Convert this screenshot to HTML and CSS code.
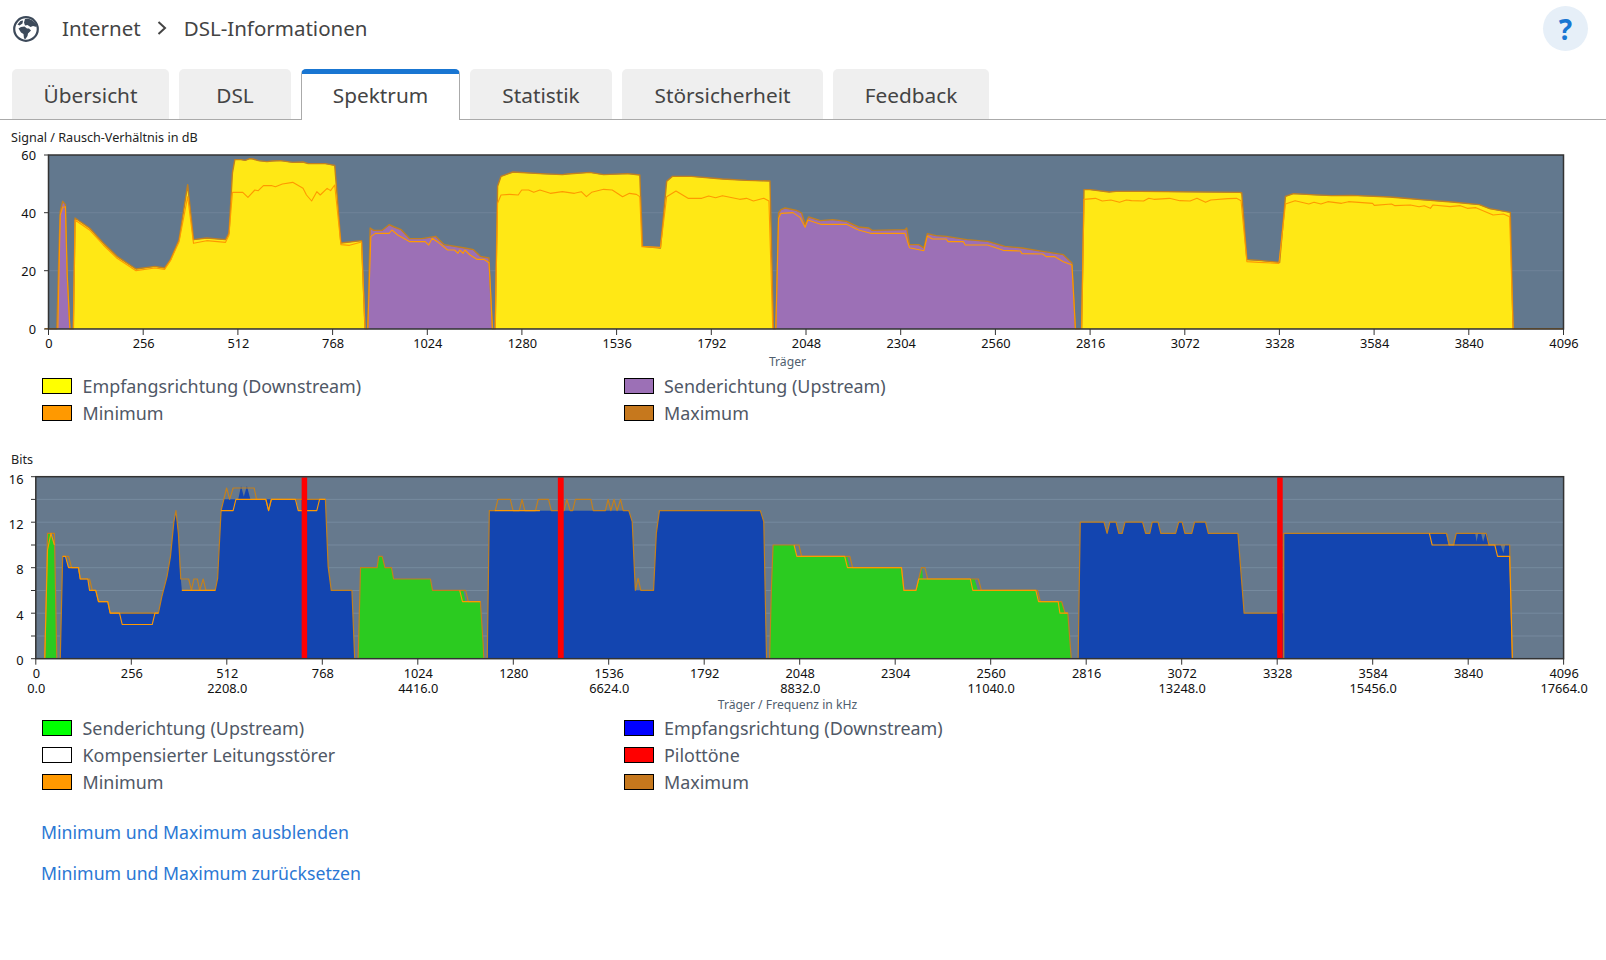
FILE: index.html
```html
<!DOCTYPE html>
<html lang="de">
<head>
<meta charset="utf-8">
<title>DSL-Informationen</title>
<link rel="stylesheet" href="styles.css">
</head>
<body>
<header class="topbar">
  <svg class="globe" viewBox="0 0 26 26" aria-hidden="true">
    <circle cx="13" cy="13" r="11.8" class="globe-ring"/>
    <path class="globe-land" d="M4.5 8.5 L7.5 5 L10 4.5 L9.5 7.5 L6.5 9.5 Z"/>
    <path class="globe-land" d="M12 3 Q18 1.8 23 8 L23.6 11 L20 10 L17.5 11 L14.5 9 L12 9.5 L11 6.5 Z"/>
    <path class="globe-land" d="M5.5 12.5 L8 11 L11.5 10.5 L14 12.5 L16 12.5 L18 14.5 L15 17.5 L14.5 20 L12.5 23 L11 22.5 L10.5 18 L8 16.5 Z"/>
  </svg>
  <nav class="crumbs">
    <span>Internet</span>
    <svg class="chevron" viewBox="0 0 10 14" aria-hidden="true"><path d="M1.5 1 L8 7 L1.5 13"/></svg>
    <span>DSL-Informationen</span>
  </nav>
  <button class="help" type="button">?</button>
</header>

<div class="tabs">
  <a class="tab">Übersicht</a>
  <a class="tab">DSL</a>
  <a class="tab tab-active">Spektrum</a>
  <a class="tab">Statistik</a>
  <a class="tab">Störsicherheit</a>
  <a class="tab">Feedback</a>
</div>

<main>
  <h2 class="chart-title chart-title-first">Signal / Rausch-Verhältnis in dB</h2>
  <svg class="chart chart-snr" viewBox="0 145 1606 225" role="img">
    <rect class="plot-bg-a" x="48.5" y="155" width="1515" height="174"/>
    <path class="grid" d="M48.5 212.7H1563.5M48.5 270.7H1563.5"/>
    <g transform="translate(0 140) scale(0.34435 0.33333)">
      <g class="purple">
        <polygon points="165,566 172,300 175,215 182,185 190,195 195,400 203,566"/>
        <polygon points="1068,566 1075,265 1085,272 1110,272 1130,255 1145,262 1165,270 1190,297 1225,297 1265,290 1290,315 1350,325 1375,330 1395,350 1420,355 1423,420 1430,566"/>
        <g transform="translate(1568 0)"><polygon points="685,566 693,220 700,210 712,205 745,212 760,220 770,255 780,232 815,243 850,240 890,245 925,262 955,265 965,272 1060,270 1065,265 1073,315 1100,315 1115,325 1125,282 1150,288 1180,290 1240,300 1300,305 1350,320 1400,325 1460,335 1520,345 1545,370 1555,566"/></g>
      </g>
      <g class="yellow">
        <polygon points="213,566 218,235 260,265 300,310 340,350 395,388 450,380 478,385 495,360 520,300 545,135 562,300 600,295 655,300 665,280 675,100 682,60 700,60 712,62 725,57 735,58 750,63 775,66 790,64 815,63 850,68 880,67 895,72 925,72 945,72 972,77 990,310 1050,303 1060,566"/>
        <polygon points="1438,566 1445,140 1455,110 1490,97 1568,102 1633,105 1648,103 1713,98 1753,105 1823,102 1858,106 1866,320 1918,325 1936,125 1953,110 2008,110 2098,118 2168,122 2236,124 2246,566"/>
        <g transform="translate(3096 0)"><polygon points="45,566 52,150 70,150 125,157 145,155 215,155 505,158 510,160 525,360 560,362 620,368 637,170 660,162 710,165 770,168 830,167 940,172 1010,178 1030,180 1120,187 1200,195 1230,207 1290,218 1298,566"/></g>
      </g>
      <g class="line-max" transform="translate(0 2)">
        <polyline points="130,564 165,564 172,300 175,212 182,182 190,192 195,400 203,564 213,564 218,232 260,262 300,307 340,347 395,385 450,377 478,382 495,357 520,297 545,132 562,297 600,292 655,297 665,277 675,97 682,57 700,57 712,59 725,54 735,55 750,60 775,63 790,61 815,60 850,65 880,64 895,69 925,69 945,69 972,74 990,307 1050,300 1060,564 1068,564 1075,262 1085,269 1110,269 1130,252 1145,259 1165,267 1190,294 1225,294 1265,287 1290,312 1350,322 1375,327 1395,347 1420,352 1423,420 1430,564 1438,564 1445,137 1455,107 1490,94 1568,99 1633,102 1648,100 1713,95 1753,102 1823,99 1858,103 1866,317 1918,322 1936,122 1953,107 2008,107 2098,115 2168,119 2236,121 2246,564 2253,564"/>
        <g transform="translate(1568 0)"><polyline points="685,564 693,217 700,207 712,202 745,209 760,217 770,252 780,229 815,240 850,237 890,242 925,259 955,262 965,269 1060,267 1065,262 1073,312 1100,312 1115,322 1125,279 1150,285 1180,287 1240,297 1300,302 1350,317 1400,322 1460,332 1520,342 1545,367 1555,564 1568,564"/></g>
        <g transform="translate(3096 0)"><polyline points="45,564 52,147 70,147 125,154 145,152 215,152 505,155 510,157 525,357 560,359 620,365 637,167 660,159 710,162 770,165 830,164 940,169 1010,175 1030,177 1120,184 1200,192 1230,204 1290,215 1298,564 1445,564"/></g>
      </g>
      <g class="line-min">
        <polyline points="168,566 175,225 182,202 190,200 195,400 203,566"/>
        <polyline points="213,566 218,240 260,270 300,315 340,355 395,392 450,384 478,388 495,362 520,305 545,170 562,310 600,302 655,307 665,285 675,157 705,157 720,172 740,150 750,152 765,137 790,137 800,140 820,132 850,127 880,145 890,165 905,183 920,155 930,165 950,145 960,152 972,135 990,314 1015,316 1050,306 1060,566"/>
        <polyline points="1068,566 1077,290 1090,280 1130,280 1138,270 1155,285 1190,305 1235,305 1245,315 1255,295 1270,305 1300,330 1320,330 1330,340 1335,330 1345,340 1350,330 1365,345 1385,358 1405,358 1420,368 1423,420 1430,566"/>
        <polyline points="1438,566 1445,190 1455,165 1480,163 1505,165 1515,150 1535,150 1550,157 1568,150 1598,160 1633,155 1668,160 1688,155 1703,170 1718,157 1753,148 1778,150 1808,170 1828,160 1848,163 1858,170 1864,320 1918,322 1936,170 1963,153 1998,175 2038,175 2058,168 2078,173 2098,167 2148,178 2168,175 2188,183 2218,175 2233,183 2244,566"/>
        <g transform="translate(1568 0)"><polyline points="685,566 693,235 700,220 735,218 755,232 770,262 778,240 815,253 890,253 925,270 960,280 1060,280 1073,323 1115,332 1125,288 1140,297 1180,297 1185,305 1230,305 1235,315 1300,315 1345,331 1395,333 1400,341 1460,342 1470,350 1495,350 1520,365 1545,375 1555,566"/></g>
        <g transform="translate(3096 0)"><polyline points="45,566 52,178 85,175 105,183 130,180 155,187 175,180 190,182 225,183 240,175 255,178 300,175 330,182 360,183 380,175 405,187 420,180 470,176 495,175 508,182 525,365 560,367 618,370 637,192 665,182 705,192 720,187 740,192 760,185 800,190 820,185 890,190 895,196 945,192 955,197 1000,195 1025,200 1040,197 1058,205 1065,195 1115,200 1145,197 1165,205 1190,203 1240,225 1270,222 1288,230 1298,566"/></g>
      </g>
    </g>
    <rect class="frame" x="48.5" y="155" width="1515" height="174"/>
    <path class="ticks" d="M44 155H48.5M44 212.7H48.5M44 270.7H48.5M44 329H48.5M48.5 329v6M143.2 329v6M237.9 329v6M332.6 329v6M427.3 329v6M521.9 329v6M616.6 329v6M711.3 329v6M806 329v6M900.7 329v6M995.4 329v6M1090.1 329v6M1184.8 329v6M1279.4 329v6M1374.1 329v6M1468.8 329v6M1563.5 329v6"/>
    <g class="ylab">
      <text x="36" y="160">60</text><text x="36" y="218">40</text><text x="36" y="276">20</text><text x="36" y="334">0</text>
    </g>
    <g class="xlab">
      <text x="49" y="348">0</text><text x="143.7" y="348">256</text><text x="238.4" y="348">512</text><text x="333.1" y="348">768</text><text x="427.8" y="348">1024</text><text x="522.4" y="348">1280</text><text x="617.1" y="348">1536</text><text x="711.8" y="348">1792</text><text x="806.5" y="348">2048</text><text x="901.2" y="348">2304</text><text x="995.9" y="348">2560</text><text x="1090.6" y="348">2816</text><text x="1185.3" y="348">3072</text><text x="1279.9" y="348">3328</text><text x="1374.6" y="348">3584</text><text x="1469.3" y="348">3840</text><text x="1564" y="348">4096</text>
    </g>
    <text class="axis-name" x="787.5" y="366">Träger</text>
  </svg>
  <ul class="legend legend-snr">
    <li class="legend-item"><i class="swatch sw-yellow"></i>Empfangsrichtung (Downstream)</li>
    <li class="legend-item"><i class="swatch sw-purple"></i>Senderichtung (Upstream)</li>
    <li class="legend-item"><i class="swatch sw-orange"></i>Minimum</li>
    <li class="legend-item"><i class="swatch sw-brown"></i>Maximum</li>
  </ul>

  <h2 class="chart-title chart-title-bits">Bits</h2>
  <svg class="chart chart-bits" viewBox="0 470 1606 242" role="img">
    <rect class="plot-bg-b" x="35.8" y="476.7" width="1528" height="182"/>
    <path class="grid-b" d="M35.8 499.4H1563.5M35.8 522.2H1563.5M35.8 545H1563.5M35.8 567.7H1563.5M35.8 590.5H1563.5M35.8 613.2H1563.5M35.8 636H1563.5"/>
    <g transform="translate(0 450) scale(0.34435 0.33333)">
      <g class="green">
        <polygon points="130,626 137,300 138,250 148,250 158,290 165,626"/>
        <polygon points="1040,626 1047,353 1095,353 1100,319 1110,319 1118,353 1137,353 1143,387 1250,387 1256,421 1335,421 1345,421 1352,455 1395,455 1403,580 1405,626"/>
        <g transform="translate(1568 0)"><polygon points="667,626 672,420 677,285 738,285 746,319 892,319 900,353 1050,353 1057,421 1092,421 1100,387 1110,353 1112,387 1262,387 1272,421 1440,421 1448,455 1515,455 1525,489.5 1533,489.5 1543,626"/></g>
      </g>
      <g class="blue">
        <polygon points="175,626 182,319 190,319 198,353 226,353 233,387 255,387 260,421 278,421 286,455 313,455 320,489.5 460,489.5 470,440 485,380 495,320 505,215 511,182 518,250 522,350 528,421 625,421 632,385 642,182 650,148 692,148 700,108 708,140 717,108 727,148 860,148 866,182 876,182 876,148 945,148 953,350 962,421 1022,421 1030,626"/>
        <polygon points="1415,626 1421,182 1826,182 1836,215 1845,421 1898,421 1906,250 1915,182 2208,182 2218,215 2226,626"/>
        <g transform="translate(3096 0)"><polygon points="35,626 41,216.5 110,216.5 119,250 127,216.5 145,216.5 153,250 163,250 171,216.5 222,216.5 231,250 243,250 250,216.5 267,216.5 275,250 318,250 327,216.5 337,216.5 345,250 365,250 373,216.5 405,216.5 413,250 499,250 517,489.5 632,489.5 632,250 1103,250 1110,285 1127,285 1133,250 1188,250 1192,275 1197,250 1205,250 1211,275 1218,250 1222,250 1228,285 1262,285 1270,310 1275,285 1288,285 1288,319 1296,626"/></g>
      </g>
      <g class="line-max-b">
        <polyline points="130,626 138,250 158,250 165,626"/>
        <polyline points="175,626 182,319 199,319 208,353 228,353 233,387 260,387 268,421 278,421 286,455 313,455 320,489.5 460,489.5 470,440 485,380 495,320 505,215 511,182 518,250 525,387 548,387 556,421 563,387 573,387 580,421 590,387 598,421 625,421 632,385 642,182 650,148 658,114 667,148 677,114 738,114 745,148 772,148 780,182 788,148 945,148 953,350 962,421 1022,421 1030,626"/>
        <polyline points="1040,626 1047,353 1095,353 1100,319 1110,319 1118,353 1137,353 1143,387 1250,387 1256,421 1352,421 1360,455 1395,455 1403,580 1405,626"/>
        <polyline points="1415,626 1421,182 1438,182 1446,148 1482,148 1490,182 1508,182 1516,148 1524,182 1555,182 1563,148 1593,148 1601,182 1638,182 1646,148 1656,182 1663,182 1671,148 1716,148 1723,182 1758,182 1766,148 1774,182 1783,148 1792,182 1802,148 1810,182 1826,182 1836,215 1845,421 1853,385 1861,421 1898,421 1906,250 1915,182 2208,182 2218,215 2226,626"/>
        <g transform="translate(1568 0)"><polyline points="667,626 672,420 677,285 745,285 752,285 760,319 900,319 908,353 1050,353 1057,421 1092,421 1108,353 1118,353 1126,387 1273,387 1282,421 1445,421 1453,455 1515,455 1525,489.5 1533,489.5 1543,626"/></g>
        <g transform="translate(3096 0)"><polyline points="35,626 41,216.5 110,216.5 119,250 127,216.5 145,216.5 153,250 163,250 171,216.5 222,216.5 231,250 243,250 250,216.5 267,216.5 275,250 318,250 327,216.5 337,216.5 345,250 365,250 373,216.5 405,216.5 413,250 499,250 517,489.5 613,489.5"/><polyline points="632,626 632,250 1105,250 1113,285 1125,285 1133,250 1220,250 1228,285 1288,285 1296,626"/></g>
      </g>
      <g class="line-min">
        <polyline points="130,626 138,300 148,250 158,285"/>
        <polyline points="182,319 190,319 199,353 228,353 233,387 255,387 260,421 278,421 286,455 313,455 320,489.5 347,489.5 355,523.6 442,523.6 450,489.5 460,489.5"/>
        <polyline points="528,421 625,421"/>
        <polyline points="642,182 677,182 685,148 772,148 780,182 788,148 858,148 866,182 920,182 928,148 945,148"/>
        <polyline points="1437,182 1568,182"/>
        <g transform="translate(1568 0)">
          <polyline points="738,285 746,319 885,319 893,353 1050,353 1057,421 1092,421 1100,387 1250,387 1257,421 1440,421 1448,455 1505,455 1510,489.5 1533,489.5"/>
        </g>
        <polyline points="1335,421 1343,455 1395,455"/>
        <g transform="translate(3096 0)">
          <polyline points="1055,250 1063,285 1245,285 1253,319 1288,319 1296,626"/>
        </g>
      </g>
      <g class="red">
        <rect x="876" y="82" width="16" height="544"/>
        <rect x="1620" y="82" width="17" height="544"/>
        <rect x="3709" y="82" width="16" height="544"/>
      </g>
    </g>
    <rect class="frame" x="35.8" y="476.7" width="1527.8" height="182"/>
    <path class="ticks" d="M31 476.7H35.8M31 499.4H35.8M31 522.2H35.8M31 545H35.8M31 567.7H35.8M31 590.5H35.8M31 613.2H35.8M31 636H35.8M31 658.7H35.8M35.8 658.7v6M131.3 658.7v6M226.8 658.7v6M322.3 658.7v6M417.8 658.7v6M513.3 658.7v6M608.7 658.7v6M704.2 658.7v6M799.7 658.7v6M895.2 658.7v6M990.7 658.7v6M1086.2 658.7v6M1181.7 658.7v6M1277.2 658.7v6M1372.7 658.7v6M1468.2 658.7v6M1563.6 658.7v6"/>
    <g class="ylab">
      <text x="23.5" y="484">16</text><text x="23.5" y="529">12</text><text x="23.5" y="574">8</text><text x="23.5" y="620">4</text><text x="23.5" y="665">0</text>
    </g>
    <g class="xlab">
      <text x="36.3" y="678">0</text><text x="131.8" y="678">256</text><text x="227.3" y="678">512</text><text x="322.8" y="678">768</text><text x="418.3" y="678">1024</text><text x="513.8" y="678">1280</text><text x="609.2" y="678">1536</text><text x="704.7" y="678">1792</text><text x="800.2" y="678">2048</text><text x="895.7" y="678">2304</text><text x="991.2" y="678">2560</text><text x="1086.7" y="678">2816</text><text x="1182.2" y="678">3072</text><text x="1277.7" y="678">3328</text><text x="1373.2" y="678">3584</text><text x="1468.7" y="678">3840</text><text x="1564.1" y="678">4096</text>
      <text x="36.3" y="693">0.0</text><text x="227.3" y="693">2208.0</text><text x="418.3" y="693">4416.0</text><text x="609.2" y="693">6624.0</text><text x="800.2" y="693">8832.0</text><text x="991.2" y="693">11040.0</text><text x="1182.2" y="693">13248.0</text><text x="1373.2" y="693">15456.0</text><text x="1564.1" y="693">17664.0</text>
    </g>
    <text class="axis-name" x="787.5" y="709">Träger / Frequenz in kHz</text>
  </svg>
  <ul class="legend legend-bits">
    <li class="legend-item"><i class="swatch sw-green"></i>Senderichtung (Upstream)</li>
    <li class="legend-item"><i class="swatch sw-blue"></i>Empfangsrichtung (Downstream)</li>
    <li class="legend-item"><i class="swatch sw-white"></i>Kompensierter Leitungsstörer</li>
    <li class="legend-item"><i class="swatch sw-red"></i>Pilottöne</li>
    <li class="legend-item"><i class="swatch sw-orange"></i>Minimum</li>
    <li class="legend-item"><i class="swatch sw-brown"></i>Maximum</li>
  </ul>

  <div class="links">
    <a class="link">Minimum und Maximum ausblenden</a>
    <a class="link">Minimum und Maximum zurücksetzen</a>
  </div>
</main>
</body>
</html>
```
FILE: styles.css
```css
* { box-sizing: border-box; }
html, body { margin: 0; padding: 0; }
body {
  background: #fff;
  color: #444;
  font-family: "Noto Sans", "Open Sans", sans-serif;
  width: 1606px;
  height: 960px;
  overflow: hidden;
}

.topbar {
  display: flex;
  align-items: center;
  height: 57px;
  padding: 0 18px 0 13px;
}
.globe { width: 26px; height: 26px; flex: none; margin: 1px 23px 0 0; }
.globe-ring { fill: #fff; stroke: #3d4a5a; stroke-width: 2.2; }
.globe-land { fill: #3d4a5a; }
.crumbs {
  display: flex;
  align-items: center;
  gap: 16.5px;
  margin-bottom: 1px;
  font-size: 20.5px;
  color: #444;
  flex: 1;
}
.chevron { width: 10px; height: 14px; }
.chevron path { fill: none; stroke: #444; stroke-width: 2; }
.help {
  width: 45px;
  height: 45px;
  border: 0;
  padding: 0;
  border-radius: 50%;
  background: #e6eff8;
  color: #1976d2;
  font: 700 28px "Noto Sans", sans-serif;
}

.tabs {
  display: grid;
  grid-template-columns: 157px 112px 159px 142px 201px 156px;
  gap: 10px;
  height: 63px;
  padding: 12px 0 0 12px;
  border-bottom: 1px solid #aaa;
}
.tab {
  display: flex;
  align-items: center;
  justify-content: center;
  height: 50px;
  padding-top: 2px;
  background: #efefef;
  border-radius: 5px 5px 0 0;
  font-size: 20.8px;
  color: #444;
}
.tab-active {
  height: 51px;
  background: #fff;
  border: 1px solid #aaa;
  border-top: 5px solid #1976d2;
  border-bottom: 0;
  padding: 0 0 4px;
  position: relative;
}

main { display: block; }

.chart-title {
  margin: 0;
  padding-left: 11px;
  line-height: 14px;
  height: 14px;
  font-size: 12.6px;
  font-weight: 400;
  color: #222;
}
.chart-title-first { margin-top: 11px; }
.chart-title-bits { margin-top: 26.6px; }

.chart { display: block; width: 1606px; }
.chart-snr { height: 225px; margin-top: 0; }
.chart-bits { height: 242px; margin-top: 3px; }

.plot-bg-a { fill: #62788e; }
.plot-bg-b { fill: #66798d; }
.grid { stroke: #6f8398; stroke-width: 1; fill: none; }
.grid-b { stroke: #768a9e; stroke-width: 1; fill: none; }
.purple { fill: #9c70b6; }
.yellow { fill: #ffe815; }
.green { fill: #2bcb20; }
.blue { fill: #1345b0; }
.red { fill: #ff0000; }
.line-max, .line-max-b, .line-min { fill: none; }
.line-max polyline, .line-max-b polyline, .line-min polyline {
  vector-effect: non-scaling-stroke;
  stroke-linejoin: round;
}
.line-max polyline { stroke: #c2801f; stroke-width: 1.4; }
.line-max-b polyline { stroke: #c2801f; stroke-width: 1.2; }
.line-min polyline { stroke: #ff9900; stroke-width: 1.1; }
.frame { fill: none; stroke: #333; stroke-width: 1.5; }
.ticks { fill: none; stroke: #333; stroke-width: 1; }
.ylab text { text-anchor: end; font-size: 12.8px; fill: #111; }
.xlab text { text-anchor: middle; font-size: 12.8px; fill: #111; }
.axis-name { text-anchor: middle; font-size: 12.2px; fill: #4f5e6e; }

.legend {
  display: grid;
  grid-template-columns: 581.5px 1fr;
  grid-auto-rows: 27.2px;
  list-style: none;
  margin: 0;
  padding: 0 0 0 42px;
}
.legend-snr { margin-top: 2px; }
.legend-bits { margin-top: 2.4px; }
.legend-item {
  display: flex;
  align-items: center;
  gap: 10.5px;
  font-size: 17.9px;
  color: #505866;
}
.swatch {
  flex: none;
  width: 30px;
  height: 16px;
  border: 1.5px solid #000;
}
.sw-yellow { background: #ffff00; }
.sw-purple { background: #9c70b6; }
.sw-orange { background: #ff9900; }
.sw-brown { background: #c6781d; }
.sw-green { background: #00ff00; }
.sw-blue { background: #0000ff; }
.sw-white { background: #fff; }
.sw-red { background: #ff0000; }

.links {
  display: flex;
  flex-direction: column;
  align-items: flex-start;
  gap: 13px;
  margin: 22px 0 0 41px;
}
.link {
  line-height: 28px;
  font-size: 17.7px;
  color: #2b78d4;
}
```
